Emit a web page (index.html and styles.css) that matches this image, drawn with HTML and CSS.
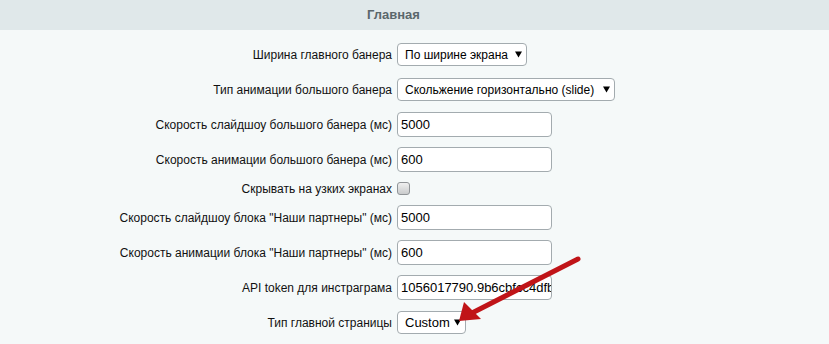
FILE: index.html
```html
<!DOCTYPE html>
<html lang="ru">
<head>
<meta charset="utf-8">
<link rel="stylesheet" href="styles.css">
</head>
<body>
<div class="page">
  <div class="header"><span class="title">Главная</span></div>
  <div class="form">
    <div class="row">
      <div class="label">Ширина главного банера</div>
      <div class="ctl"><div class="select w1"><span>По ширине экрана</span><svg class="tri" width="7" height="7" viewBox="0 0 7 7"><path d="M0 0.5H7L3.5 6.5Z"/></svg></div></div>
    </div>
    <div class="row">
      <div class="label">Тип анимации большого банера</div>
      <div class="ctl"><div class="select w2"><span>Скольжение горизонтально (slide)</span><svg class="tri" width="7" height="7" viewBox="0 0 7 7"><path d="M0 0.5H7L3.5 6.5Z"/></svg></div></div>
    </div>
    <div class="row">
      <div class="label">Скорость слайдшоу большого банера (мс)</div>
      <div class="ctl"><div class="input">5000</div></div>
    </div>
    <div class="row">
      <div class="label">Скорость анимации большого банера (мс)</div>
      <div class="ctl"><div class="input">600</div></div>
    </div>
    <div class="row short">
      <div class="label">Скрывать на узких экранах</div>
      <div class="ctl"><span class="checkbox"></span></div>
    </div>
    <div class="row">
      <div class="label">Скорость слайдшоу блока "Наши партнеры" (мс)</div>
      <div class="ctl"><div class="input">5000</div></div>
    </div>
    <div class="row">
      <div class="label">Скорость анимации блока "Наши партнеры" (мс)</div>
      <div class="ctl"><div class="input">600</div></div>
    </div>
    <div class="row">
      <div class="label">API token для инстраграма</div>
      <div class="ctl"><div class="input clip">1056017790.9b6cbfcc4dfb</div></div>
    </div>
    <div class="row">
      <div class="label">Тип главной страницы</div>
      <div class="ctl"><div class="select w3"><span>Custom</span><svg class="tri" width="7" height="7" viewBox="0 0 7 7"><path d="M0 0.5H7L3.5 6.5Z"/></svg></div></div>
    </div>
  </div>
  <svg class="arrow" width="829" height="344" viewBox="0 0 829 344">
    <line x1="578" y1="259" x2="472" y2="313" stroke="#c01418" stroke-width="5" stroke-linecap="round"/>
    <polygon points="459,321 464,302 481,319" fill="#c01418"/>
  </svg>
</div>
</body>
</html>
```
FILE: styles.css
```css
html, body {
  margin: 0;
  padding: 0;
}
body {
  background: #f5f9f9;
  font-family: "Liberation Sans", Arial, sans-serif;
  font-size: 12px;
  color: #000;
}
.page {
  position: relative;
  width: 829px;
  height: 344px;
  overflow: hidden;
}
.header {
  height: 30px;
  background: #e0e8ea;
  display: flex;
  align-items: center;
  justify-content: center;
  padding-right: 42px;
}
.title {
  font-family: "Liberation Sans", Arial, sans-serif;
  font-weight: bold;
  font-size: 13px;
  color: #5b676c;
  padding-bottom: 2px;
}
.form {
  padding-top: 7px;
}
.row {
  display: grid;
  grid-template-columns: 392px 1fr;
  column-gap: 5px;
  align-items: center;
  height: 35px;
}
.row.short {
  height: 23px;
}
.label {
  text-align: right;
  white-space: nowrap;
  color: #111;
}
.ctl {
  display: flex;
  align-items: center;
}
.input {
  box-sizing: border-box;
  width: 155px;
  height: 25px;
  background: #fff;
  border: 1px solid #a3abaf;
  border-radius: 4px;
  padding: 0 3px;
  display: flex;
  align-items: center;
  white-space: nowrap;
  overflow: hidden;
  font-size: 13px;
}
.select {
  box-sizing: border-box;
  height: 23px;
  background: #fff;
  border: 1px solid #a3abaf;
  border-radius: 4px;
  padding: 0 4px 0 7px;
  display: flex;
  align-items: center;
  justify-content: space-between;
  white-space: nowrap;
  font-size: 12px;
}
.select.w1 { width: 130px; }
.select.w2 { width: 218px; }
.select.w3 { width: 69px; font-size: 13px; }
.tri { fill: #000; }
.checkbox {
  box-sizing: border-box;
  width: 13px;
  height: 13px;
  border: 1px solid #909497;
  border-radius: 3px;
  background: linear-gradient(#f0f0f0, #c9cbcc);
}
.arrow {
  position: absolute;
  left: 0;
  top: 0;
  pointer-events: none;
}
```
